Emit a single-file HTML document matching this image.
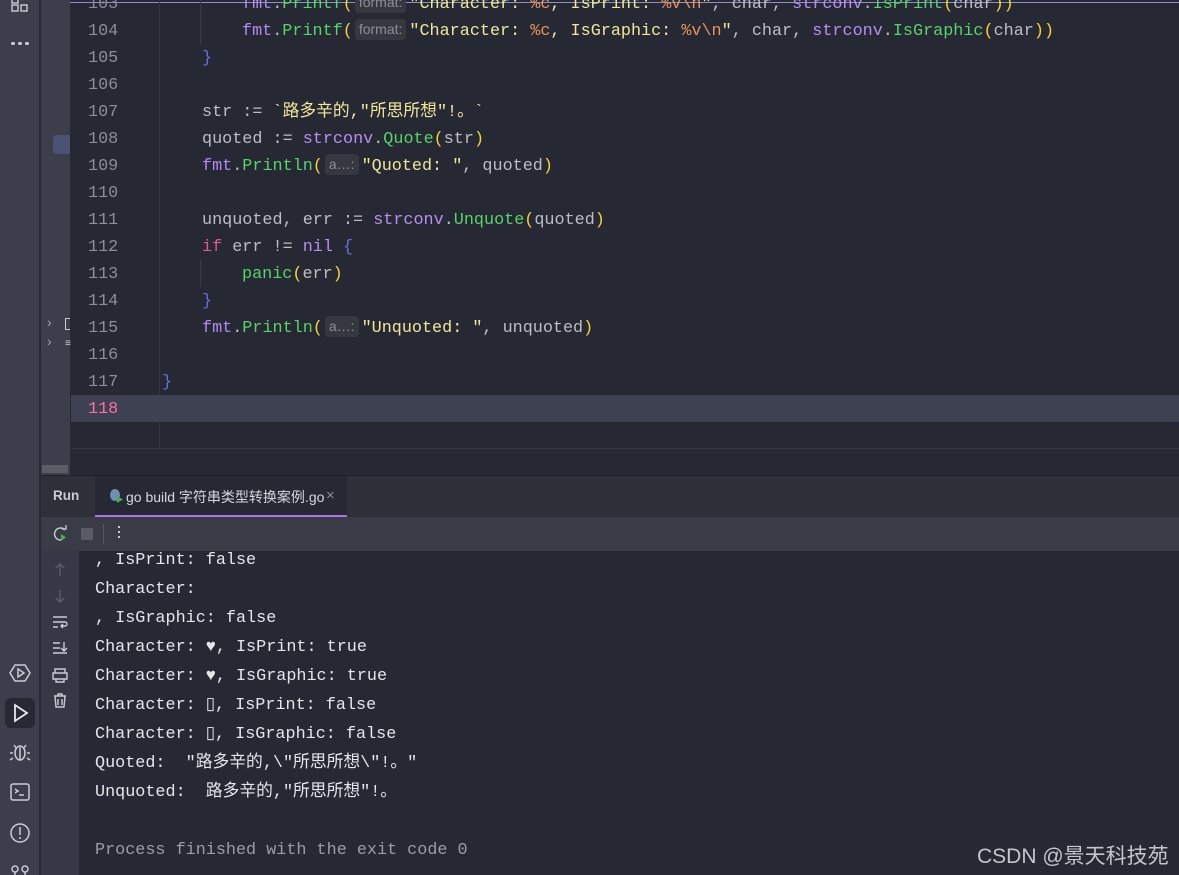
<!DOCTYPE html>
<html><head><meta charset="utf-8"><style>
*{margin:0;padding:0;box-sizing:border-box}
html,body{width:1179px;height:875px;overflow:hidden}
body{background:#262833;position:relative;font-family:"Liberation Mono","Noto Sans CJK SC",monospace}
.a{position:absolute}
.m{font-size:16.8px;white-space:pre;line-height:27px;color:#bcbec4}
.ln{color:#8a8f9c;left:88px;width:30px}
.f{color:#b08af0}.g{color:#57d36a}.s{color:#eee89a}.p{color:#f2d43a}.b{color:#6272e0}.o{color:#e8925c}.k{color:#e0578c}.n{color:#b78ff0}
.h{display:inline-block;background:#36383f;color:#8c8f97;font-family:"Liberation Sans",sans-serif;font-size:14px;line-height:21px;padding:0 4px;border-radius:4px;margin:0 3px 0 2px;vertical-align:1px}
.c{left:95px;font-size:16.8px;white-space:pre;color:#e4e6ea;line-height:29px}
</style></head><body>
<div class="a" style="left:0;top:0;width:40px;height:875px;background:#3c3f4b;border-right:1px solid #2a2c33"></div>
<div class="a" style="left:41px;top:0;width:29px;height:475px;background:#3c3f4b"></div>
<div class="a" style="left:53px;top:135px;width:17px;height:19px;background:#4b5275;border-radius:4px 0 0 4px"></div>
<div class="a" style="left:70px;top:2px;width:1109px;height:1px;background:#8c8fc8"></div>
<div class="a" style="left:159px;top:0;width:1px;height:448px;background:#34363f"></div>
<div class="a" style="left:71px;top:395px;width:1108px;height:27px;background:#3e4152"></div>
<div class="a" style="left:71px;top:448px;width:1108px;height:1px;background:#34363f"></div>
<div class="a" style="left:42px;top:465px;width:26px;height:8px;background:#5a5d66"></div>
<div class="a" style="left:200px;top:0;width:1px;height:44px;background:#3a3c45"></div>
<div class="a" style="left:200px;top:260px;width:1px;height:27px;background:#3a3c45"></div>
<svg class="a" style="left:10px;top:0" width="20" height="14"><g fill="none" stroke="#c9ccd3" stroke-width="1.4"><rect x="2" y="-3" width="6" height="6"/><rect x="2" y="5" width="6" height="6"/><rect x="11" y="5" width="6" height="6"/></g></svg>
<div class="a" style="left:11px;top:42px;width:4px;height:3px;background:#c9ccd3;border-radius:2px"></div>
<div class="a" style="left:18px;top:42px;width:4px;height:3px;background:#c9ccd3;border-radius:2px"></div>
<div class="a" style="left:25px;top:42px;width:4px;height:3px;background:#c9ccd3;border-radius:2px"></div>
<div class="a" style="left:47px;top:314px;color:#a0a3aa;font-size:14px;font-family:'Liberation Sans'">›</div>
<div class="a" style="left:47px;top:333px;color:#a0a3aa;font-size:14px;font-family:'Liberation Sans'">›</div>
<div class="a" style="left:65px;top:318px;width:5px;height:12px;border:1px solid #ccc;border-right:none"></div>
<div class="a" style="left:65px;top:339px;color:#ccc;font-size:10px">≡</div>
<div class="a" style="left:5px;top:698px;width:30px;height:30px;background:#262833;border-radius:6px"></div>
<svg class="a" style="left:8px;top:662px" width="24" height="220" fill="none" stroke="#c9ccd3" stroke-width="1.5">
<path d="M7 3h10l5 8-5 8H7L2 11z"/><path d="M10 7v8l6-4z"/>
<path d="M7 43v16l12-8z" stroke="#e6e8ec" stroke-width="1.8"/>
<ellipse cx="12" cy="91" rx="5" ry="7"/><path d="M8 86l-2-3M16 86l2-3M5 91H2M19 91h3M5 96l-3 2M19 96l3 2M12 85v13"/>
<rect x="3" y="122" width="18" height="16" rx="2"/><path d="M7 127l3 2-3 2M11 133h5"/>
<circle cx="12" cy="171" r="9"/><path d="M12 165v8M12 175v2"/>
<circle cx="7" cy="207" r="3"/><circle cx="17" cy="207" r="3"/><path d="M7 210v6M17 210v6"/>
</svg>
<div class="a m ln" style="top:-9px">103</div>
<div class="a m" style="left:242px;top:-9px"><span class="f">fmt</span>.<span class="g">Printf</span><span class="p">(</span><span class="h">format:</span><span class="s">"Character: <span class="o">%c</span>, IsPrint: <span class="o">%v\n</span>"</span>, char, <span class="n">strconv</span>.<span class="g">IsPrint</span><span class="p">(</span>char<span class="p">))</span></div>
<div class="a m ln" style="top:18px">104</div>
<div class="a m" style="left:242px;top:18px"><span class="f">fmt</span>.<span class="g">Printf</span><span class="p">(</span><span class="h">format:</span><span class="s">"Character: <span class="o">%c</span>, IsGraphic: <span class="o">%v\n</span>"</span>, char, <span class="n">strconv</span>.<span class="g">IsGraphic</span><span class="p">(</span>char<span class="p">))</span></div>
<div class="a m ln" style="top:45px">105</div><div class="a m b" style="left:202px;top:45px">}</div>
<div class="a m ln" style="top:72px">106</div>
<div class="a m ln" style="top:99px">107</div>
<div class="a m" style="left:202px;top:99px">str := <span class="s">`路多辛的,"所思所想"!。`</span></div>
<div class="a m ln" style="top:126px">108</div>
<div class="a m" style="left:202px;top:126px">quoted := <span class="n">strconv</span>.<span class="g">Quote</span><span class="p">(</span>str<span class="p">)</span></div>
<div class="a m ln" style="top:153px">109</div>
<div class="a m" style="left:202px;top:153px"><span class="f">fmt</span>.<span class="g">Println</span><span class="p">(</span><span class="h">a…:</span><span class="s">"Quoted: "</span>, quoted<span class="p">)</span></div>
<div class="a m ln" style="top:180px">110</div>
<div class="a m ln" style="top:207px">111</div>
<div class="a m" style="left:202px;top:207px">unquoted, err := <span class="n">strconv</span>.<span class="g">Unquote</span><span class="p">(</span>quoted<span class="p">)</span></div>
<div class="a m ln" style="top:234px">112</div>
<div class="a m" style="left:202px;top:234px"><span class="k">if</span> err != <span class="n">nil</span> <span class="b">{</span></div>
<div class="a m ln" style="top:261px">113</div>
<div class="a m" style="left:242px;top:261px"><span class="g">panic</span><span class="p">(</span>err<span class="p">)</span></div>
<div class="a m ln" style="top:288px">114</div><div class="a m b" style="left:202px;top:288px">}</div>
<div class="a m ln" style="top:315px">115</div>
<div class="a m" style="left:202px;top:315px"><span class="f">fmt</span>.<span class="g">Println</span><span class="p">(</span><span class="h">a…:</span><span class="s">"Unquoted: "</span>, unquoted<span class="p">)</span></div>
<div class="a m ln" style="top:342px">116</div>
<div class="a m ln" style="top:369px">117</div><div class="a m b" style="left:162px;top:369px">}</div>
<div class="a m ln" style="top:396px;color:#ff6f9c">118</div>
<div class="a" style="left:41px;top:475px;width:1138px;height:42px;background:#2e3039;border-top:1px solid #1f2026"></div>
<div class="a" style="left:53px;top:488px;font-family:'Liberation Sans';font-weight:bold;font-size:13.5px;color:#c9ccd3">Run</div>
<div class="a" style="left:95px;top:476px;width:252px;height:41px;background:#262833;border-bottom:2px solid #a874e8"></div>
<svg class="a" style="left:108px;top:488px" width="16" height="16"><ellipse cx="7" cy="7" rx="5" ry="6" fill="#6f8fb0"/><path d="M9 8v7l6-3.5z" fill="#4caf50"/></svg>
<div class="a" style="left:126px;top:487px;font-family:'Liberation Sans','Noto Sans CJK SC',sans-serif;font-size:14px;color:#d5d7dc">go build 字符串类型转换案例.go</div>
<div class="a" style="left:326px;top:487px;font-family:'Liberation Sans';font-size:15px;color:#8a8d94">×</div>
<div class="a" style="left:41px;top:517px;width:1138px;height:34px;background:#393b46"></div>
<svg class="a" style="left:52px;top:525px" width="16" height="18" fill="none"><path d="M13 5A6 6 0 1 0 9 15" stroke="#c9ccd3" stroke-width="1.4"/><path d="M10 4h4V0" stroke="#c9ccd3" stroke-width="1.3"/><path d="M9 9v7l5-3.5z" fill="#4caf50"/></svg>
<div class="a" style="left:81px;top:528px;width:12px;height:12px;background:#5a5c63;border-radius:1px"></div>
<div class="a" style="left:103px;top:524px;width:1px;height:20px;background:#555862"></div>
<div class="a" style="left:118px;top:526px;width:2px;height:2px;background:#c9ccd3;box-shadow:0 5px #c9ccd3,0 10px #c9ccd3"></div>
<div class="a" style="left:41px;top:551px;width:38px;height:324px;background:#363945"></div>
<svg class="a" style="left:50px;top:560px" width="20" height="150" fill="none" stroke-width="1.4">
<path d="M10 4v12M6 8l4-4 4 4" stroke="#5c5f68"/>
<path d="M10 30v12M6 38l4 4 4-4" stroke="#5c5f68"/>
<path d="M3 57h14M3 62h12a2 2 0 0 1 0 4H11M13 64l-2 2 2 2M3 67h5" stroke="#c9ccd3"/>
<path d="M3 83h7M3 88h7M3 93h14M14 82v9M11 88l3 3 3-3" stroke="#c9ccd3"/>
<path d="M5 113h10v-4H5zM3 113h14v6H3zM6 119h8v3H6z" stroke="#c9ccd3"/>
<path d="M4 136h12M8 136v-2h4v2M5 136l1 11h8l1-11M8 139v6M12 139v6" stroke="#c9ccd3"/>
</svg>
<div class="a c" style="top:546px">, IsPrint: false</div>
<div class="a c" style="top:575px">Character:</div>
<div class="a c" style="top:604px">, IsGraphic: false</div>
<div class="a c" style="top:633px">Character: ♥, IsPrint: true</div>
<div class="a c" style="top:662px">Character: ♥, IsGraphic: true</div>
<div class="a c" style="top:691px">Character: ▯, IsPrint: false</div>
<div class="a c" style="top:720px">Character: ▯, IsGraphic: false</div>
<div class="a c" style="top:749px">Quoted:  "路多辛的,\"所思所想\"!。"</div>
<div class="a c" style="top:778px">Unquoted:  路多辛的,"所思所想"!。</div>
<div class="a c" style="top:836px;color:#9a9da5">Process finished with the exit code 0</div>
<div class="a" style="left:977px;top:840px;font-family:'Liberation Sans','Noto Sans CJK SC',sans-serif;font-size:21px;color:#c4c6cb">CSDN @景天科技苑</div>
</body></html>
